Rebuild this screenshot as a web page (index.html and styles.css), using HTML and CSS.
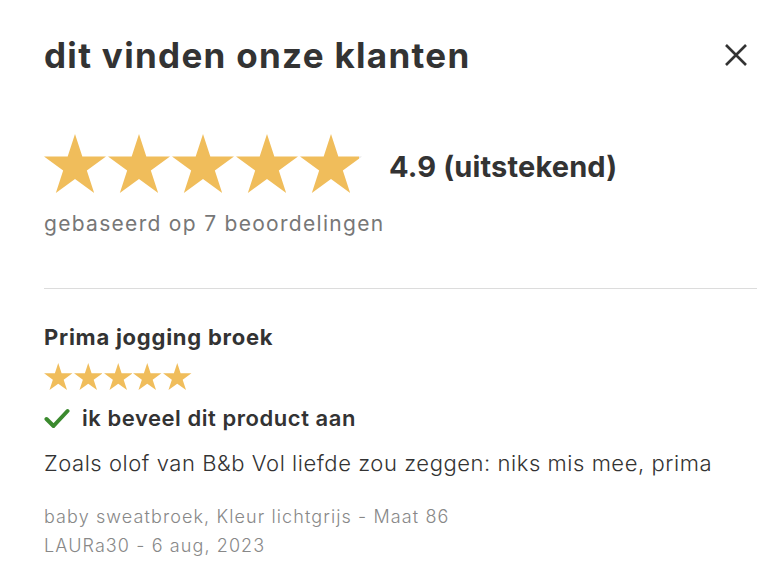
FILE: index.html
```html
<!DOCTYPE html>
<html lang="nl">
<head>
<meta charset="utf-8">
<meta name="viewport" content="width=device-width, initial-scale=1">
<title>Beoordelingen</title>
<link rel="stylesheet" href="styles.css">
</head>
<body>
	<div class="panel">
		<div class="panel-head">
			<h1 class="panel-title">dit vinden onze klanten</h1>
			<button class="close" aria-label="sluiten">
				<svg viewBox="0 0 24 24" width="24" height="24"><path d="M2 2 L22 22 M22 2 L2 22" stroke="#333" stroke-width="2.6" fill="none"/></svg>
			</button>
		</div>

		<div class="summary">
			<div class="summary-row">
				<div class="stars stars-big">
					<svg viewBox="0 0 95.1 90.45"><polygon points="47.55,0 58.78,34.55 95.1,34.55 65.71,55.9 76.94,90.45 47.55,69.1 18.16,90.45 29.39,55.9 0,34.55 36.32,34.55"/></svg>
					<svg viewBox="0 0 95.1 90.45"><polygon points="47.55,0 58.78,34.55 95.1,34.55 65.71,55.9 76.94,90.45 47.55,69.1 18.16,90.45 29.39,55.9 0,34.55 36.32,34.55"/></svg>
					<svg viewBox="0 0 95.1 90.45"><polygon points="47.55,0 58.78,34.55 95.1,34.55 65.71,55.9 76.94,90.45 47.55,69.1 18.16,90.45 29.39,55.9 0,34.55 36.32,34.55"/></svg>
					<svg viewBox="0 0 95.1 90.45"><polygon points="47.55,0 58.78,34.55 95.1,34.55 65.71,55.9 76.94,90.45 47.55,69.1 18.16,90.45 29.39,55.9 0,34.55 36.32,34.55"/></svg>
					<svg viewBox="0 0 95.1 90.45">
						<defs>
							<linearGradient id="part" x1="0" x2="1" y1="0" y2="0">
								<stop offset="0.95" stop-color="#f0bd5b"/>
								<stop offset="0.95" stop-color="#e6e6e6"/>
							</linearGradient>
						</defs>
						<polygon fill="url(#part)" points="47.55,0 58.78,34.55 95.1,34.55 65.71,55.9 76.94,90.45 47.55,69.1 18.16,90.45 29.39,55.9 0,34.55 36.32,34.55"/>
					</svg>
				</div>
				<span class="score">4.9 (uitstekend)</span>
			</div>
			<p class="based">gebaseerd op 7 beoordelingen</p>
		</div>

		<hr class="divider">

		<div class="review">
			<h2 class="review-title">Prima jogging broek</h2>
			<div class="stars stars-small">
				<svg viewBox="0 0 95.1 90.45"><polygon points="47.55,0 58.78,34.55 95.1,34.55 65.71,55.9 76.94,90.45 47.55,69.1 18.16,90.45 29.39,55.9 0,34.55 36.32,34.55"/></svg>
				<svg viewBox="0 0 95.1 90.45"><polygon points="47.55,0 58.78,34.55 95.1,34.55 65.71,55.9 76.94,90.45 47.55,69.1 18.16,90.45 29.39,55.9 0,34.55 36.32,34.55"/></svg>
				<svg viewBox="0 0 95.1 90.45"><polygon points="47.55,0 58.78,34.55 95.1,34.55 65.71,55.9 76.94,90.45 47.55,69.1 18.16,90.45 29.39,55.9 0,34.55 36.32,34.55"/></svg>
				<svg viewBox="0 0 95.1 90.45"><polygon points="47.55,0 58.78,34.55 95.1,34.55 65.71,55.9 76.94,90.45 47.55,69.1 18.16,90.45 29.39,55.9 0,34.55 36.32,34.55"/></svg>
				<svg viewBox="0 0 95.1 90.45"><polygon points="47.55,0 58.78,34.55 95.1,34.55 65.71,55.9 76.94,90.45 47.55,69.1 18.16,90.45 29.39,55.9 0,34.55 36.32,34.55"/></svg>
			</div>
			<div class="recommend">
				<svg viewBox="0 0 26 21" width="26" height="21"><path d="M2.5 11 L9.5 18 L23.5 3" stroke="#3b8a2e" stroke-width="4" fill="none" stroke-linecap="round" stroke-linejoin="round"/></svg>
				<span>ik beveel dit product aan</span>
			</div>
			<p class="review-text">Zoals olof van B&amp;b Vol liefde zou zeggen: niks mis mee, prima</p>
			<p class="review-meta">baby sweatbroek, Kleur lichtgrijs - Maat 86</p>
			<p class="review-meta">LAURa30 - 6 aug, 2023</p>
		</div>
	</div>
</body>
</html>
```

FILE: styles.css
```css
body {
	margin: 0;
	background: #fff;
	color: #333;
	font-family: Inter, "Noto Sans", sans-serif;
}

.panel {
	padding: 35px 13px 20px 44px;
}

.panel-head {
	display: flex;
	align-items: center;
	justify-content: space-between;
}

.panel-title {
	margin: 0;
	font-size: 35px;
	line-height: 40px;
	font-weight: 700;
	letter-spacing: 1.3px;
	color: #333;
}

.close {
	border: 0;
	background: none;
	padding: 0;
	margin-right: 9px;
	width: 24px;
	height: 24px;
	cursor: pointer;
}

.summary {
	margin-top: 59px;
}

.summary-row {
	display: flex;
	align-items: center;
	gap: 27px;
}

.stars {
	display: flex;
	fill: #f0bd5b;
}

.stars-big {
	gap: 2px;
}
.stars-big svg {
	width: 62px;
	height: 59px;
}

.stars-small {
	gap: 1.3px;
	margin-top: 13px;
}
.stars-small svg {
	width: 28.5px;
	height: 27px;
}

.score {
	margin-top: 6px;
	font-size: 29px;
	font-weight: 700;
	letter-spacing: 0.15px;
	color: #333;
}

.based {
	margin: 17px 0 0;
	font-size: 21px;
	line-height: 28px;
	letter-spacing: 1.3px;
	color: #777;
}

.divider {
	border: 0;
	border-top: 1px solid #dcdcdc;
	margin: 50px 0 0;
}

.review {
	padding-top: 35px;
}

.review-title {
	margin: 0;
	font-size: 22px;
	line-height: 26px;
	font-weight: 700;
	letter-spacing: 0.75px;
	color: #333;
}

.recommend {
	display: flex;
	align-items: center;
	gap: 12px;
	margin-top: 15px;
	font-size: 22px;
	font-weight: 600;
	letter-spacing: 0.55px;
	color: #333;
}

.review-text {
	margin: 18px 0 0;
	font-size: 22px;
	line-height: 28px;
	font-weight: 300;
	letter-spacing: 0.55px;
	color: #333;
}

.review-meta {
	margin: 0;
	font-size: 18px;
	line-height: 29px;
	font-weight: 300;
	letter-spacing: 1.1px;
	color: #888;
}

.review-text + .review-meta {
	margin-top: 25px;
}
```
